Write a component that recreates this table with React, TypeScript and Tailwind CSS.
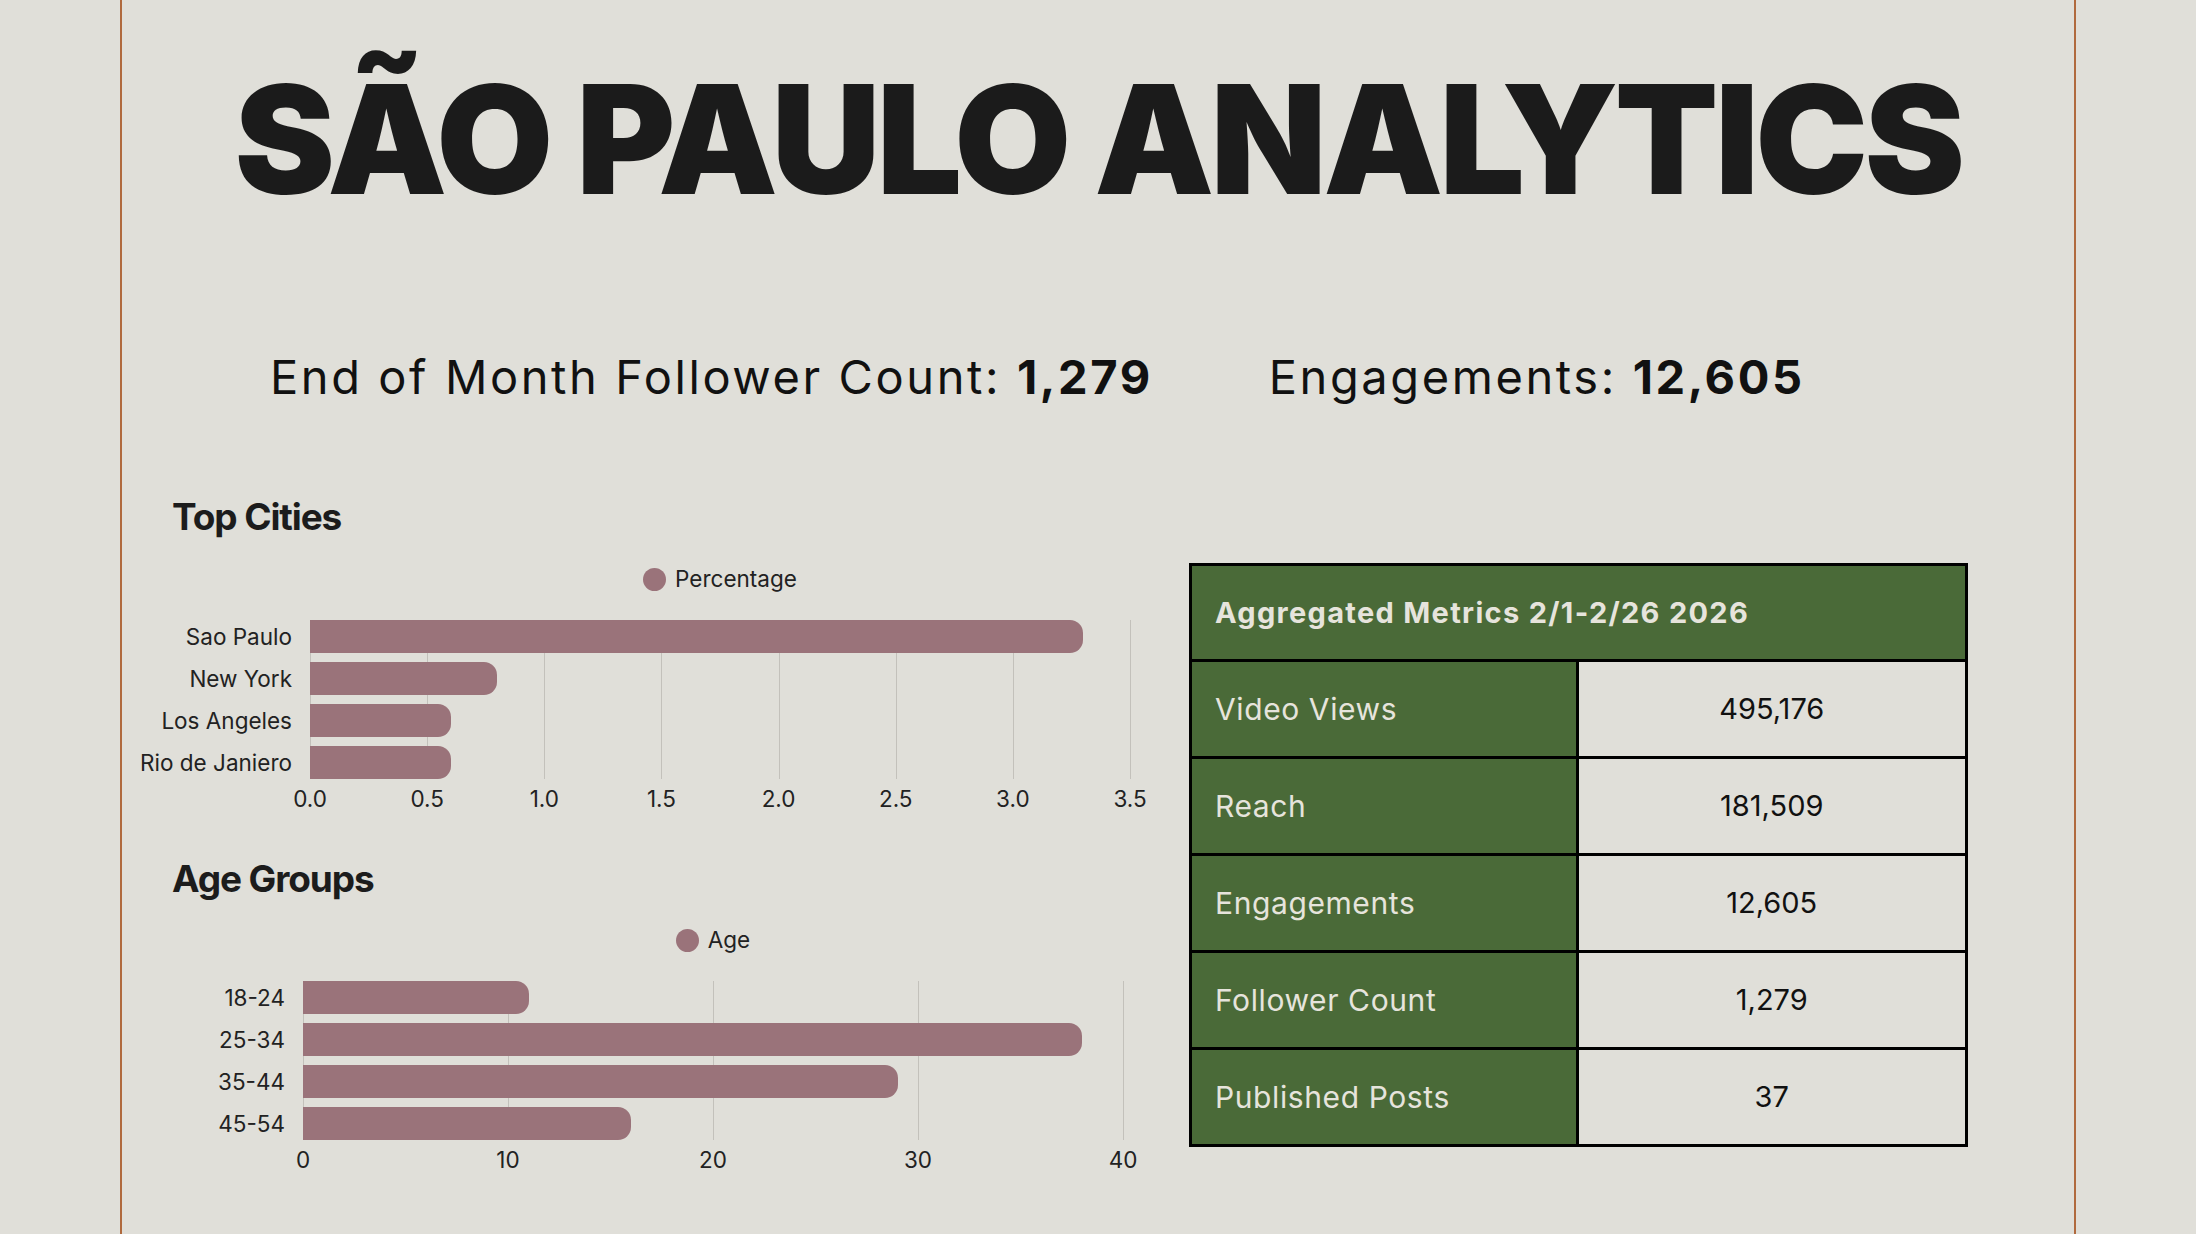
import React from 'react';

type Datum = { label: string; value: number };

const cities: Datum[] = [
    { label: 'Sao Paulo', value: 3.3 },
    { label: 'New York', value: 0.8 },
    { label: 'Los Angeles', value: 0.6 },
    { label: 'Rio de Janiero', value: 0.6 },
];

const ages: Datum[] = [
    { label: '18-24', value: 11 },
    { label: '25-34', value: 38 },
    { label: '35-44', value: 29 },
    { label: '45-54', value: 16 },
];

const metrics = [
    { name: 'Video Views', value: '495,176' },
    { name: 'Reach', value: '181,509' },
    { name: 'Engagements', value: '12,605' },
    { name: 'Follower Count', value: '1,279' },
    { name: 'Published Posts', value: '37' },
];

const PLOT_W = 820;

type ChartProps = {
    legend: string;
    data: Datum[];
    max: number;
    ticks: number[];
    format: (n: number) => string;
    labelWidth: string;
};

const BarChart: React.FC<ChartProps> = ({ legend, data, max, ticks, format, labelWidth }) => {
    const x = (v: number) => (v / max) * PLOT_W;
    return (
        <div className="flex text-[22.5px] text-[#222]">
            <div className={`${labelWidth} shrink-0`} />
            <div className="ml-[18px] w-[820px] flex flex-col">
                {/* legend */}
                <div className="h-[24px] flex items-center justify-center gap-[9px]">
                    <span className="w-[23px] h-[23px] rounded-full bg-[#9a737a]" />
                    <span className="leading-[24px]">{legend}</span>
                </div>

                {/* plot */}
                <div className="relative h-[159px] mt-[29px]">
                    {ticks.map((t) => (
                        <div
                            key={t}
                            className="absolute top-0 bottom-0 w-px bg-[#c3c1bb]"
                            style={{ left: x(t) }}
                        />
                    ))}
                    <div className="relative flex flex-col gap-[9px]">
                        {data.map((d) => (
                            <div key={d.label} className="relative h-[33px] flex items-center">
                                <span className="absolute right-full mr-[18px] whitespace-nowrap leading-[33px]">
                                    {d.label}
                                </span>
                                <div
                                    className="h-[33px] bg-[#9a737a] rounded-r-[13px]"
                                    style={{ width: x(d.value) }}
                                />
                            </div>
                        ))}
                    </div>
                </div>

                {/* ticks */}
                <div className="relative h-[22px] mt-[9px]">
                    {ticks.map((t) => (
                        <span
                            key={t}
                            className="absolute top-0 -translate-x-1/2 leading-[22px]"
                            style={{ left: x(t) }}
                        >
                            {format(t)}
                        </span>
                    ))}
                </div>
            </div>
        </div>
    );
};

export default function App() {
    return (
        <div className="w-full h-[1234px] bg-[#e0dfd9] overflow-hidden" style={{ fontFamily: 'Inter, "Liberation Sans", sans-serif' }}>
            <div className="ml-[120px] w-[1956px] h-full border-x-2 border-[#b06a3e] flex flex-col">
                <h1 className="pt-[64px] text-center text-[151px] leading-[151px] font-black tracking-[-0.024em] text-[#1b1b1b] whitespace-nowrap">
                    SÃO PAULO ANALYTICS
                </h1>

                <div className="mt-[139px] pl-[148px] flex gap-[116px] text-[47px] leading-[45px] tracking-[0.055em] text-[#111] whitespace-nowrap">
                    <p>
                        End of Month Follower Count: <span className="font-bold">1,279</span>
                    </p>
                    <p>
                        Engagements: <span className="font-bold">12,605</span>
                    </p>
                </div>

                <div className="mt-[99px] pl-[10px] flex">
                    <div className="w-[1057px] shrink-0 flex flex-col">
                        <h2 className="ml-[40px] text-[37px] leading-[37px] font-bold tracking-[-0.03em] text-[#1c1c1c]">
                            Top Cities
                        </h2>
                        <div className="mt-[32px]">
                            <BarChart
                                legend="Percentage"
                                data={cities}
                                max={3.5}
                                ticks={[0, 0.5, 1, 1.5, 2, 2.5, 3, 3.5]}
                                format={(n) => n.toFixed(1)}
                                labelWidth="w-[160px]"
                            />
                        </div>

                        <h2 className="mt-[50px] ml-[40px] text-[37px] leading-[37px] font-bold tracking-[-0.03em] text-[#1c1c1c]">
                            Age Groups
                        </h2>
                        <div className="mt-[31px]">
                            <BarChart
                                legend="Age"
                                data={ages}
                                max={40}
                                ticks={[0, 10, 20, 30, 40]}
                                format={(n) => String(n)}
                                labelWidth="w-[153px]"
                            />
                        </div>
                    </div>

                    <div className="mt-[65px] w-[779px] border-[3px] border-black self-start">
                        <div className="h-[96px] bg-[#4a6a38] border-b-[3px] border-black flex items-center pl-[23px] text-[29px] font-bold tracking-[0.045em] text-[#e6e4dc] whitespace-nowrap">
                            Aggregated Metrics 2/1-2/26 2026
                        </div>
                        {metrics.map((m, i) => (
                            <div
                                key={m.name}
                                className={`grid grid-cols-2 ${i < metrics.length - 1 ? 'h-[97px] border-b-[3px] border-black' : 'h-[94px]'}`}
                            >
                                <div className="bg-[#4a6a38] border-r-[3px] border-black flex items-center pl-[23px] text-[30px] tracking-[0.02em] text-[#e6e4dc]">
                                    {m.name}
                                </div>
                                <div className="flex items-center justify-center text-[29px] text-[#111]">
                                    {m.value}
                                </div>
                            </div>
                        ))}
                    </div>
                </div>
            </div>
        </div>
    );
}
